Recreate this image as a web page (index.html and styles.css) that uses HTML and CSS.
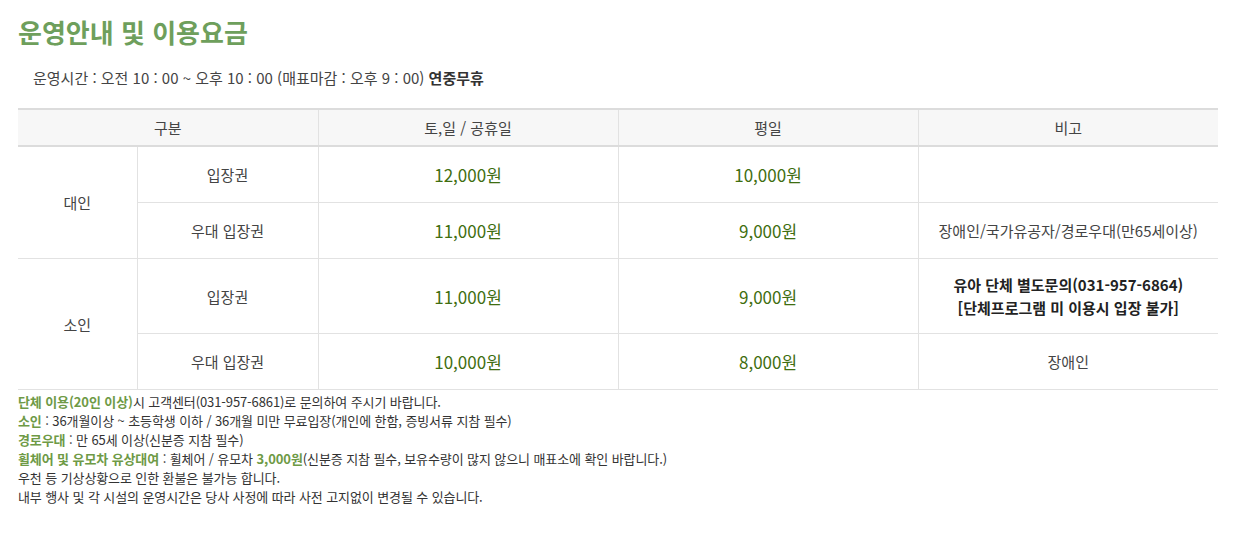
FILE: index.html
```html
<!DOCTYPE html>
<html lang="ko">
<head>
  <meta charset="UTF-8" />
  <meta name="viewport" content="width=device-width, initial-scale=1.0" />
  <title>운영안내 및 이용요금</title>
  <link rel="stylesheet" href="styles.css">
</head>
<body>
  <div class="wrap">
    <h2 class="title">운영안내 및 이용요금</h2>
    <p class="hours">운영시간 : 오전 10 : 00 ~ 오후 10 : 00 (매표마감 : 오후 9 : 00) <strong>연중무휴</strong></p>

    <table class="price-table">
      <colgroup>
        <col class="c1">
        <col class="c2">
        <col class="c3">
        <col class="c4">
        <col class="c5">
      </colgroup>
      <thead>
        <tr>
          <th colspan="2">구분</th>
          <th>토,일 / 공휴일</th>
          <th>평일</th>
          <th>비고</th>
        </tr>
      </thead>
      <tbody>
        <tr class="row">
          <td rowspan="2">대인</td>
          <td>입장권</td>
          <td class="price">12,000원</td>
          <td class="price">10,000원</td>
          <td></td>
        </tr>
        <tr class="row">
          <td>우대 입장권</td>
          <td class="price">11,000원</td>
          <td class="price">9,000원</td>
          <td>장애인/국가유공자/경로우대(만65세이상)</td>
        </tr>
        <tr class="row tall">
          <td rowspan="2">소인</td>
          <td>입장권</td>
          <td class="price">11,000원</td>
          <td class="price">9,000원</td>
          <td class="strong">유아 단체 별도문의(031-957-6864)<br>[단체프로그램 미 이용시 입장 불가]</td>
        </tr>
        <tr class="row">
          <td>우대 입장권</td>
          <td class="price">10,000원</td>
          <td class="price">8,000원</td>
          <td>장애인</td>
        </tr>
      </tbody>
    </table>

    <ul class="notes">
      <li><b>단체 이용(20인 이상)</b>시 고객센터(031-957-6861)로 문의하여 주시기 바랍니다.</li>
      <li><b>소인</b> : 36개월이상 ~ 초등학생 이하 / 36개월 미만 무료입장(개인에 한함, 증빙서류 지참 필수)</li>
      <li><b>경로우대</b> : 만 65세 이상(신분증 지참 필수)</li>
      <li><b>휠체어 및 유모차 유상대여</b> : 휠체어 / 유모차 <b>3,000원</b>(신분증 지참 필수, 보유수량이 많지 않으니 매표소에 확인 바랍니다.)</li>
      <li>우천 등 기상상황으로 인한 환불은 불가능 합니다.</li>
      <li>내부 행사 및 각 시설의 운영시간은 당사 사정에 따라 사전 고지없이 변경될 수 있습니다.</li>
    </ul>
  </div>
</body>
</html>
```

FILE: styles.css
```css
body {
  margin: 0;
  background: #fff;
  color: #333;
  font-family: "Noto Sans CJK KR", "Noto Sans", sans-serif;
}
.wrap {
  padding: 14px 31px 0 18px;
}
.title {
  margin: 0;
  font-size: 26px;
  line-height: 36px;
  font-weight: 700;
  color: #6e9f5c;
}
.hours {
  margin: 17px 0 19px 15px;
  font-size: 15px;
  line-height: 22px;
  color: #444;
}
.hours strong {
  font-weight: 700;
  color: #333;
}
.price-table {
  width: 1200px;
  border-collapse: collapse;
  table-layout: fixed;
  font-size: 15px;
}
.c1 { width: 119px; }
.c2 { width: 181px; }
.c3, .c4, .c5 { width: 300px; }
.price-table th {
  height: 35px;
  padding: 0;
  background: #f7f7f7;
  border-top: 2px solid #dcdcdc;
  border-bottom: 2px solid #dcdcdc;
  border-left: 1px solid #e2e2e2;
  font-weight: 400;
  color: #444;
}
.price-table th:first-child {
  border-left: none;
}
.price-table td {
  height: 55px;
  padding: 0;
  text-align: center;
  border-bottom: 1px solid #e2e2e2;
  border-left: 1px solid #e2e2e2;
  color: #444;
}
.price-table tbody tr:first-child td:first-child,
.price-table tbody tr.tall td:first-child {
  border-left: none;
}
.price-table tr.tall td {
  height: 74px;
}
.price-table td.price {
  color: #3f6e10;
  font-size: 17px;
}
.price-table td.strong {
  font-weight: 700;
  color: #222;
  line-height: 23px;
}
.notes {
  list-style: none;
  margin: 2px 0 0;
  padding: 0;
  font-size: 13px;
  line-height: 19px;
  color: #333;
  letter-spacing: -0.1px;
}
.notes b {
  color: #6e9a46;
  font-weight: 700;
}
```
